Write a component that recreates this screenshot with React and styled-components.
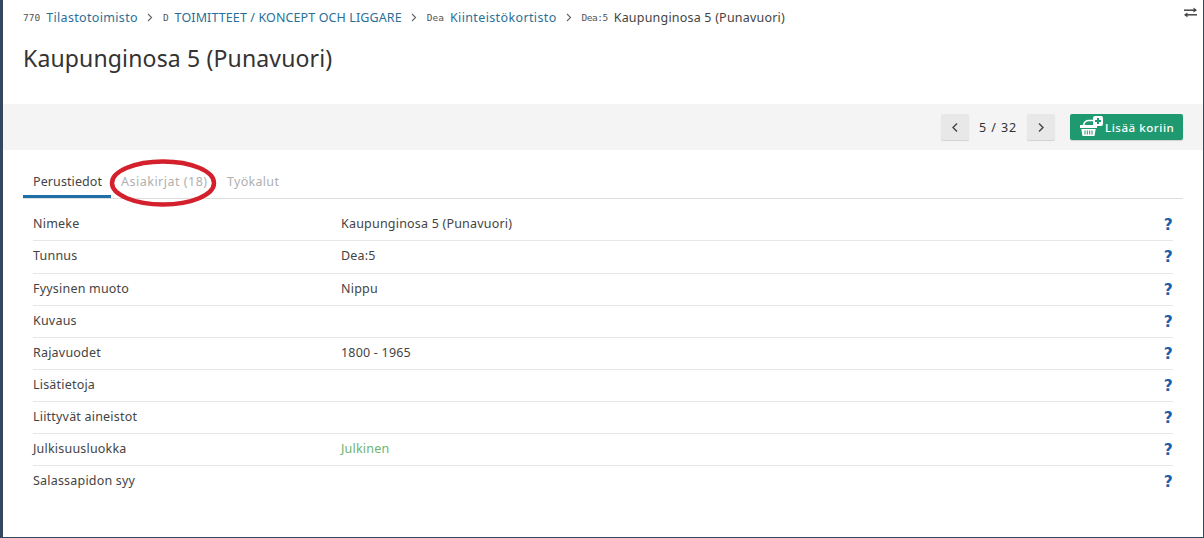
import React from "react";
import styled, { createGlobalStyle } from "styled-components";

const Global = createGlobalStyle`
  html, body { margin: 0; padding: 0; background: #fff; }
  body { font-family: "Noto Sans", "Open Sans", sans-serif; overflow: hidden; letter-spacing: 0.2px; }
  * { box-sizing: border-box; }
`;
const Page = styled.div`
  width: 1204px; height: 538px; display: flex; flex-direction: column; position: relative;
  border-left: 3px solid #33475f; border-right: 1px solid #33475f; border-bottom: 1px solid #33475f;
`;
const Crumbs = styled.nav`
  display: flex; align-items: center; height: 34px; padding-left: 20px; font-size: 12.5px; color: #444;
`;
const Code = styled.span`
  font: 9.5px "DejaVu Sans Mono", monospace; letter-spacing: ${p => (p.$tight ? "-0.5px" : "0")}; color: #555; margin-right: 6px;
`;
const CrumbLink = styled.a`color: #2a6f97; letter-spacing: ${p => p.$ls}px;`;
const Sep = styled.svg`margin: 0 9.5px; flex: none;`;
const Title = styled.h1`
  margin: 8px 0 0 20px; font-size: 23px; font-weight: 400; color: #333; height: 62px; line-height: 32px; letter-spacing: 0.15px;
`;
const Toolbar = styled.div`
  height: 46px; background: #f4f4f4; display: flex; align-items: center; justify-content: flex-end; padding-right: 20px;
`;
const PageBtn = styled.button`
  width: 28px; height: 26px; background: #e8e8e8; border: 0; border-radius: 2px; display: flex; align-items: center; justify-content: center;
  padding: 0; box-shadow: 0 1px 1px rgba(0,0,0,.14);
`;
const Count = styled.span`font-size: 12.5px; color: #333; width: 58px; text-align: center; letter-spacing: 0.9px;`;
const Cart = styled.button`
  margin-left: 15px; width: 113px; height: 26px; background: #1f9a70; color: #fff; border: 0; border-radius: 2px;
  box-shadow: 0 1px 1px rgba(0,0,0,.14);
  font: 500 11.5px "Noto Sans", sans-serif; letter-spacing: 0.55px; display: flex; align-items: center; gap: 1px; padding: 0 0 0 9px;
`;
const Tabs = styled.div`
  margin: 17px 20px 0; display: flex; height: 32px; border-bottom: 1px solid #ddd; font-size: 12.5px;
`;
const Tab = styled.div`
  padding: 6px 0 0 10px; width: ${p => p.$w}px; color: ${p => (p.$active ? "#444" : "#b0b0b0")};
  letter-spacing: ${p => p.$ls}px; height: 31px; white-space: nowrap;
  border-bottom: ${p => (p.$active ? "3px solid #1f6fa8" : "0")};
`;
const Rows = styled.div`margin: 9px 30px 0;`;
const Row = styled.div`
  display: grid; grid-template-columns: 308px 1fr 10px; align-items: center; height: 32px; padding-bottom: 3px;
  font-size: 12.5px; color: #444; border-bottom: ${p => (p.$last ? "0" : "1px solid #e6e6e6")};
  &:nth-child(-n+2) { height: 33px; }
  &:first-child { padding-bottom: 1px; }
`;
const Val = styled.span`color: ${p => (p.$green ? "#6fb36f" : "#444")};`;
const Help = styled.span`
  color: #1a5ea8; font: 700 15.5px "DejaVu Sans", sans-serif; justify-self: end; margin-top: 3px;
`;
const Circle = styled.svg`position: absolute; left: 105px; top: 158px;`;
const Swap = styled.svg`position: absolute; right: 6px; top: 7px;`;

const data = [
  ["Nimeke", "Kaupunginosa 5 (Punavuori)"], ["Tunnus", "Dea:5"], ["Fyysinen muoto", "Nippu"], ["Kuvaus", ""],
  ["Rajavuodet", "1800 - 1965"], ["Lisätietoja", ""], ["Liittyvät aineistot", ""], ["Julkisuusluokka", "Julkinen", true], ["Salassapidon syy", ""],
];

const Chevron = () => (
  <Sep width="6" height="9" viewBox="0 0 6 9" fill="none" stroke="#666" strokeWidth="1.1"><path d="M1 1l3.6 3.5L1 8" /></Sep>
);

export default function App() {
  return (
    <Page>
      <Global />
      <Crumbs>
        <Code>770</Code><CrumbLink $ls={0.33}>Tilastotoimisto</CrumbLink><Chevron />
        <Code>D</Code><CrumbLink $ls={0.11}>TOIMITTEET / KONCEPT OCH LIGGARE</CrumbLink><Chevron />
        <Code>Dea</Code><CrumbLink $ls={0.37}>Kiinteistökortisto</CrumbLink><Chevron />
        <Code $tight>Dea:5</Code><span>Kaupunginosa 5 (Punavuori)</span>
      </Crumbs>
      <Swap width="13" height="11" viewBox="0 0 13 11" fill="none" stroke="#444" strokeWidth="1.5">
        <path d="M0 3.2h12" /><path d="M9.5 .5v5L13 3.2z" fill="#444" stroke="none" />
        <path d="M13 7.8H1" /><path d="M3.5 5.5v5L0 7.8z" fill="#444" stroke="none" />
      </Swap>
      <Title>Kaupunginosa 5 (Punavuori)</Title>
      <Toolbar>
        <PageBtn aria-label="Edellinen">
          <svg width="8" height="11" viewBox="0 0 8 11" fill="none" stroke="#444" strokeWidth="1.4"><path d="M6 1.5L2 5.5l4 4" /></svg>
        </PageBtn>
        <Count>5 / 32</Count>
        <PageBtn aria-label="Seuraava">
          <svg width="8" height="11" viewBox="0 0 8 11" fill="none" stroke="#444" strokeWidth="1.4"><path d="M2 1.5l4 4-4 4" /></svg>
        </PageBtn>
        <Cart>
          <svg width="25" height="22" viewBox="0 0 25 22">
            <path d="M4.5 9.5C5 6 7 4.5 10 4.5h5" fill="none" stroke="#fff" strokeWidth="1.6" />
            <path d="M1 9h17v3H1z" fill="#fff" />
            <path d="M2.3 13h14.4l-1.2 7H3.5z" fill="#fff" />
            <path d="M6 14.5v4M8.3 14.5v4M10.7 14.5v4M13 14.5v4" stroke="#1f9a70" strokeWidth="1" />
            <rect x="14" y="0" width="10" height="10" rx="2" fill="#fff" />
            <path d="M19 2v6M16 5h6" stroke="#1f9a70" strokeWidth="2" />
          </svg>
          Lisää koriin
        </Cart>
      </Toolbar>
      <Tabs>
        <Tab $active $w={88} $ls={0.1}>Perustiedot</Tab>
        <Tab $w={106} $ls={0.5}>Asiakirjat (18)</Tab>
        <Tab $w={80} $ls={0.3}>Työkalut</Tab>
      </Tabs>
      <Rows>
        {data.map(([k, v, g], i) => (
          <Row key={k} $last={i === data.length - 1}>
            <span>{k}</span><Val $green={g}>{v}</Val><Help>?</Help>
          </Row>
        ))}
      </Rows>
      <Circle width="112" height="52" viewBox="0 0 112 52" fill="none"><ellipse cx="55" cy="25" rx="51" ry="21.5" stroke="#d3202c" strokeWidth="4.5" /></Circle>
    </Page>
  );
}
